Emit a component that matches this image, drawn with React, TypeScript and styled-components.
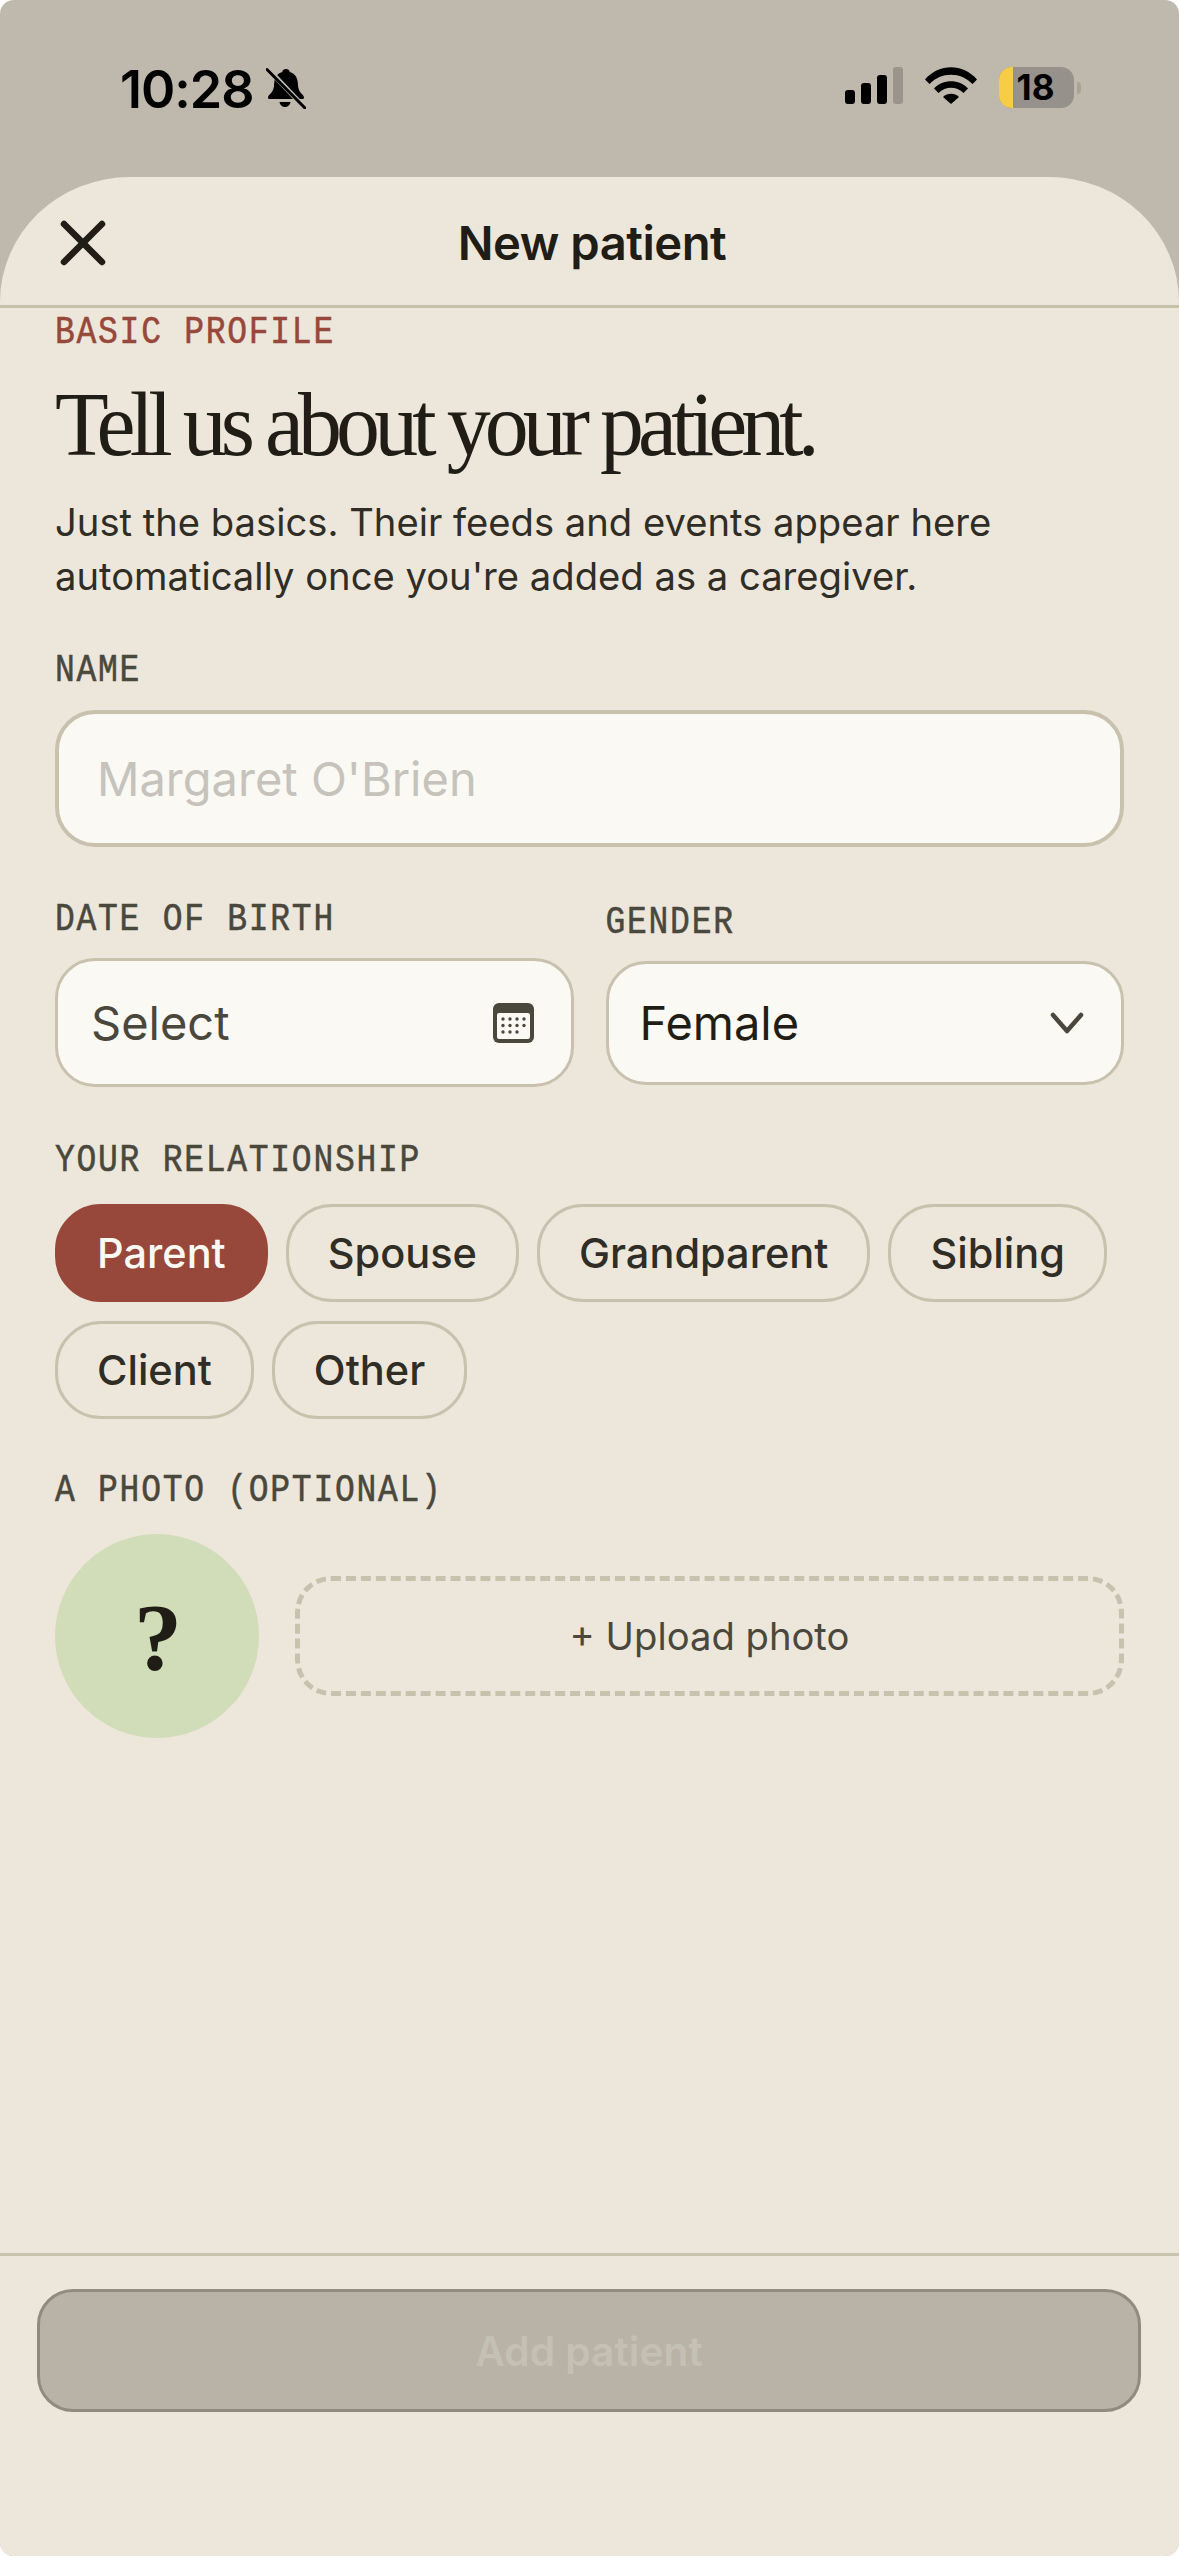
import styled, { createGlobalStyle } from 'styled-components'

const GlobalStyle = createGlobalStyle`
  html, body {
    margin: 0;
    padding: 0;
    background: #ffffff;
  }
  * {
    box-sizing: border-box;
  }
`

const Screen = styled.div`
  width: 1179px;
  height: 2556px;
  display: flex;
  flex-direction: column;
  overflow: hidden;
  border-radius: 14px;
  background: #bfb8ad;
  font-family: Inter, 'Noto Sans', sans-serif;
  color: #1f1d16;
`

const StatusBar = styled.div`
  flex: none;
  height: 177px;
  display: flex;
  justify-content: space-between;
  padding: 67px 98px 0 120px;
`

const TimeGroup = styled.div`
  display: flex;
  align-items: flex-start;
  gap: 12px;
  height: 42px;
`

const Time = styled.span`
  padding-top: 2px;
  font-size: 52px;
  line-height: 42px;
  font-weight: 600;
  letter-spacing: -1px;
  color: #000;
`

const StatusIcons = styled.div`
  display: flex;
  align-items: flex-start;
  gap: 22px;
`

const Battery = styled.div`
  display: flex;
  align-items: center;
  gap: 3px;
`

const BatteryBody = styled.div`
  position: relative;
  width: 75px;
  height: 41px;
  border-radius: 13px;
  overflow: hidden;
  background: #96918a;
  display: flex;
  align-items: center;
  justify-content: center;
`

const BatteryFill = styled.div`
  position: absolute;
  left: 0;
  top: 0;
  bottom: 0;
  width: 14px;
  background: #f6cd45;
`

const BatteryLevel = styled.span`
  position: relative;
  padding-right: 2px;
  font-size: 35px;
  line-height: 41px;
  font-weight: 700;
  color: #000;
`

const BatteryTip = styled.div`
  width: 4px;
  height: 12px;
  border-radius: 0 6px 6px 0;
  background: #a8a398;
`

const Sheet = styled.div`
  flex: 1;
  display: flex;
  flex-direction: column;
  min-height: 0;
  background: #ede7db;
  border-radius: 130px 130px 0 0 / 125px 125px 0 0;
`

const Header = styled.header`
  flex: none;
  height: 131px;
  display: grid;
  grid-template-columns: 1fr auto 1fr;
  align-items: center;
  padding: 3px 50px 0 55px;
  border-bottom: 3px solid #c8c1ae;
`

const Title = styled.h1`
  margin: 0;
  font-size: 47.2px;
  line-height: 60px;
  font-weight: 600;
  letter-spacing: -0.5px;
`

const CloseButton = styled.div`
  display: flex;
  align-items: center;
  padding-left: 5px;
`

const Body = styled.main`
  flex: 1;
  min-height: 0;
  padding: 6px 55px 0;
  display: flex;
  flex-direction: column;
`

const Label = styled.div<{ $accent?: boolean }>`
  font-family: 'Liberation Mono', 'DejaVu Sans Mono', monospace;
  font-size: 33px;
  line-height: 40px;
  letter-spacing: 1.73px;
  white-space: pre;
  transform: scaleY(1.15);
  -webkit-text-stroke: 0.5px currentColor;
  color: ${({ $accent }) => ($accent ? '#97483a' : '#4a473d')};
`

const Heading = styled.h2`
  margin: 20px 0 0;
  font-family: 'Liberation Serif', serif;
  font-size: 92px;
  line-height: 100px;
  font-weight: 400;
  letter-spacing: -6.2px;
  white-space: nowrap;
  transform: scaleX(0.955);
  transform-origin: left center;
`

const Intro = styled.p`
  margin: 21px 0 0;
  font-size: 38.2px;
  line-height: 54px;
  color: #2f2d25;
`

const Section = styled.section<{ $top: number }>`
  margin-top: ${({ $top }) => $top}px;
  display: flex;
  flex-direction: column;
  gap: 18px;
`

const Field = styled.div<{ $height: number; $inset: number; $border?: number }>`
  height: ${({ $height }) => $height}px;
  display: flex;
  align-items: center;
  justify-content: space-between;
  padding: 0 37px 0 ${({ $inset }) => $inset}px;
  background: #fbf9f3;
  border: ${({ $border }) => $border ?? 3}px solid #c8c1ae;
  border-radius: 40px;
  font-size: 47px;
`

const Placeholder = styled.span`
  color: #c5c3bc;
`

const MutedValue = styled.span`
  color: #4a473d;
`

const TwoColumns = styled.div`
  margin-top: 54px;
  display: grid;
  grid-template-columns: 1fr 1fr;
  column-gap: 32px;
  align-items: center;
`

const Column = styled.div`
  display: flex;
  flex-direction: column;
  gap: 17px;
`

const Chips = styled.div`
  display: flex;
  flex-wrap: wrap;
  gap: 19px 18px;
  padding-top: 4px;
`

const Chip = styled.div<{ $active?: boolean }>`
  height: 98px;
  display: flex;
  align-items: center;
  padding: 0 39px;
  border-radius: 46px;
  border: 3px solid ${({ $active }) => ($active ? '#97483a' : '#c8c1ae')};
  background: ${({ $active }) => ($active ? '#97483a' : 'transparent')};
  color: ${({ $active }) => ($active ? '#fbf9f3' : '#2f2d25')};
  font-size: 41.5px;
  font-weight: 500;
`

const PhotoRow = styled.div`
  display: flex;
  align-items: center;
  gap: 36px;
  padding-top: 4px;
`

const Avatar = styled.div`
  flex: none;
  width: 204px;
  height: 204px;
  border-radius: 50%;
  background: #d1dcb9;
  display: flex;
  align-items: center;
  justify-content: center;
  padding: 2px 0 0 2px;
  font-family: 'Liberation Serif', serif;
  font-size: 96px;
  font-weight: 700;
  color: #1f1d16;
`

const UploadButton = styled.div`
  flex: 1;
  height: 120px;
  display: flex;
  align-items: center;
  justify-content: center;
  border: 5px dashed #c8c1ae;
  border-radius: 36px;
  font-size: 38.2px;
  color: #4a473d;
`

const Footer = styled.footer`
  flex: none;
  height: 303px;
  padding: 33px 38px 0 37px;
  border-top: 3px solid #c8c1ae;
`

const SubmitButton = styled.div`
  height: 123px;
  display: flex;
  align-items: center;
  justify-content: center;
  padding-top: 2px;
  background: #b9b2a7;
  border: 3px solid #8f8c7f;
  border-radius: 36px;
  font-size: 40.7px;
  font-weight: 600;
  color: #c5c0b4;
`

const relationships = ['Parent', 'Spouse', 'Grandparent', 'Sibling', 'Client', 'Other']

const BellOffIcon = () => (
  <svg width="40" height="42" viewBox="0 0 40 42">
    <path
      d="M20 2c2 0 3.500 1.300 3.800 3 5 1.500 7.700 5.500 8 11 .3 5 1 8 3.500 10.500 1.500 1.500 2.700 2.800 2.700 4 0 1-.8 1.500-2 1.500H4c-1.200 0-2-.5-2-1.500 0-1.200 1.200-2.500 2.700-4C7.200 24 8 21 8.200 16c.3-5.500 3-9.500 8-11 .3-1.700 1.800-3 3.800-3Z"
      fill="#000"
    />
    <path d="M13.500 35h11c-.4 2.800-2.600 5-5.500 5s-5.100-2.200-5.500-5Z" fill="#000" />
    <path d="M2 2 39 41" stroke="#bfb8ad" strokeWidth="5" />
    <path d="M1 2.500 39 41" stroke="#000" strokeWidth="3" strokeLinecap="round" />
  </svg>
)

const SignalIcon = () => (
  <svg width="58" height="37" viewBox="0 0 58 37">
    <rect x="0" y="23" width="10" height="14" rx="3" fill="#000" />
    <rect x="16" y="16" width="10" height="21" rx="3" fill="#000" />
    <rect x="32" y="8" width="10" height="29" rx="3" fill="#000" />
    <rect x="48" y="0" width="10" height="37" rx="3" fill="#9a958c" />
  </svg>
)

const WifiIcon = () => (
  <svg width="52" height="37" viewBox="0 0 52 37">
    <path d="M0 12.500C14 -3.800 38 -3.800 52 12.500L47.500 17C36 4.500 16 4.500 4.500 17Z" fill="#000" />
    <path d="M9 21.500C18 11.800 34 11.800 43 21.500L38.500 26C31.500 19 20.500 19 13.500 26Z" fill="#000" />
    <path d="M18 30C22.500 25.700 29.500 25.700 34 30L26 37Z" fill="#000" />
  </svg>
)

const CloseIcon = () => (
  <svg width="46" height="46" viewBox="0 0 46 46">
    <path d="M4 4 42 42M42 4 4 42" stroke="#1f1d16" strokeWidth="6.500" strokeLinecap="round" />
  </svg>
)

const CalendarIcon = () => (
  <svg width="41" height="40" viewBox="0 0 41 40">
    <rect width="41" height="40" rx="6" fill="#4a473d" />
    <rect x="4" y="10" width="33" height="26" rx="2" fill="#fbf9f3" />
    {[0, 1, 2].map((row) =>
      [0, 1, 2, 3].map((col) =>
        row === 2 && col === 3 ? null : (
          <circle key={`${row}-${col}`} cx={10 + col * 7} cy={16 + row * 6.5} r="1.700" fill="#4a473d" />
        ),
      ),
    )}
  </svg>
)

const ChevronIcon = () => (
  <svg width="34" height="24" viewBox="0 0 34 24">
    <path d="M3 4 17 20 31 4" fill="none" stroke="#4a473d" strokeWidth="4.500" strokeLinecap="round" strokeLinejoin="round" />
  </svg>
)

export default function App() {
  return (
    <>
      <GlobalStyle />
      <Screen>
        <StatusBar>
          <TimeGroup>
            <Time>10:28</Time>
            <BellOffIcon />
          </TimeGroup>
          <StatusIcons>
            <SignalIcon />
            <WifiIcon />
            <Battery>
              <BatteryBody>
                <BatteryFill />
                <BatteryLevel>18</BatteryLevel>
              </BatteryBody>
              <BatteryTip />
            </Battery>
          </StatusIcons>
        </StatusBar>
        <Sheet>
          <Header>
            <CloseButton>
              <CloseIcon />
            </CloseButton>
            <Title>New patient</Title>
          </Header>
          <Body>
            <Label $accent>BASIC PROFILE</Label>
            <Heading>Tell us about your patient.</Heading>
            <Intro>
              Just the basics. Their feeds and events appear here
              <br />
              automatically once you're added as a caregiver.
            </Intro>
            <Section $top={49}>
              <Label>NAME</Label>
              <Field $height={137} $inset={38} $border={4}>
                <Placeholder>Margaret O'Brien</Placeholder>
              </Field>
            </Section>
            <TwoColumns>
              <Column>
                <Label>DATE OF BIRTH</Label>
                <Field $height={129} $inset={33}>
                  <MutedValue>Select</MutedValue>
                  <CalendarIcon />
                </Field>
              </Column>
              <Column>
                <Label>GENDER</Label>
                <Field $height={124} $inset={31}>
                  <span>Female</span>
                  <ChevronIcon />
                </Field>
              </Column>
            </TwoColumns>
            <Section $top={55}>
              <Label>YOUR RELATIONSHIP</Label>
              <Chips>
                {relationships.map((name) => (
                  <Chip key={name} $active={name === 'Parent'}>
                    {name}
                  </Chip>
                ))}
              </Chips>
            </Section>
            <Section $top={53}>
              <Label>A PHOTO (OPTIONAL)</Label>
              <PhotoRow>
                <Avatar>?</Avatar>
                <UploadButton>+ Upload photo</UploadButton>
              </PhotoRow>
            </Section>
          </Body>
          <Footer>
            <SubmitButton>Add patient</SubmitButton>
          </Footer>
        </Sheet>
      </Screen>
    </>
  )
}
